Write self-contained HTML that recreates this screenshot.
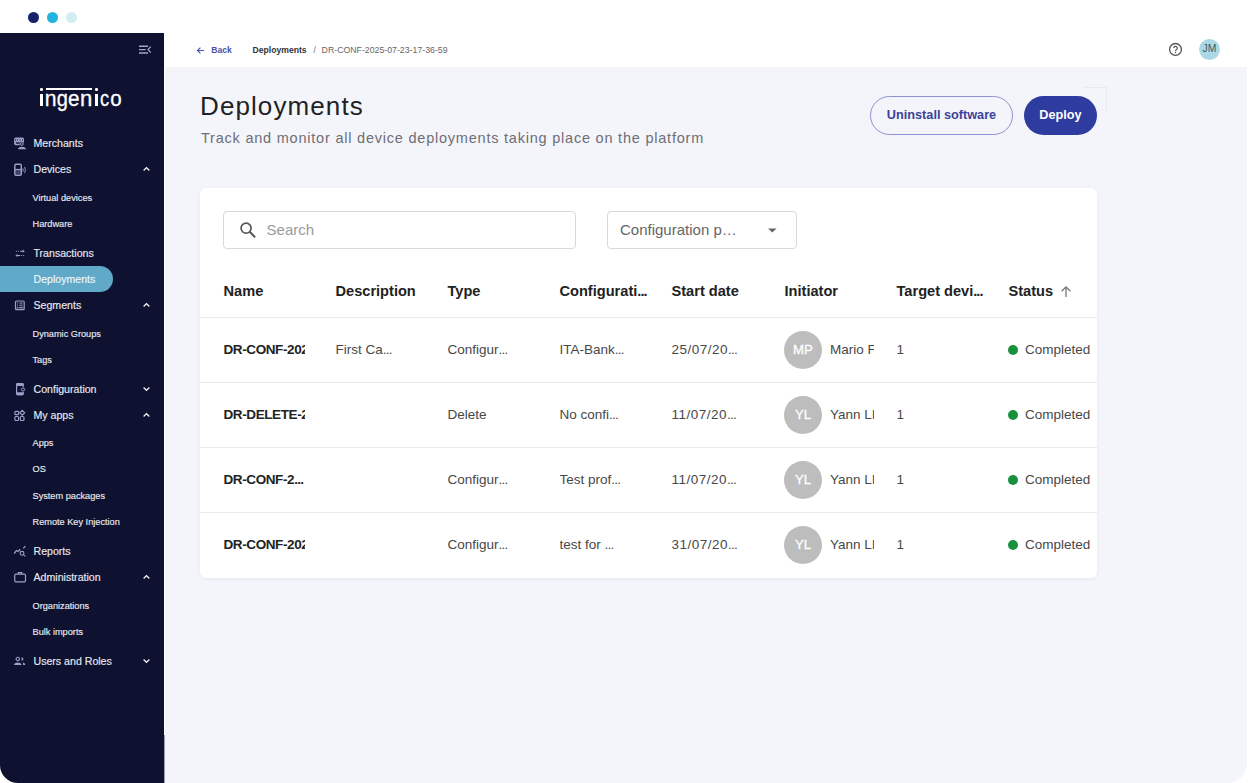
<!DOCTYPE html>
<html><head><meta charset="utf-8">
<style>
*{margin:0;padding:0;box-sizing:border-box}
html,body{width:1248px;height:783px;overflow:hidden;background:#fff;font-family:"Liberation Sans",sans-serif;position:relative}
.a{position:absolute;white-space:nowrap}
.dot{position:absolute;width:11px;height:11px;border-radius:50%;top:12px}
#side{position:absolute;left:0;top:33px;width:164px;height:750px;background:#0e1230;border-bottom-left-radius:18px}
#main{position:absolute;left:165px;top:66.6px;width:1081.6px;height:716.4px;background:#f4f5fa;border-bottom-right-radius:20px}
.mi{position:absolute;left:33.5px;height:16px;line-height:16px;font-size:10.6px;color:#e8e9f1;white-space:nowrap;-webkit-text-stroke:0.15px #e8e9f1}
.si{position:absolute;left:32.5px;height:14px;line-height:14px;font-size:9.2px;color:#e8e9f1;white-space:nowrap;-webkit-text-stroke:0.15px #e8e9f1}
.th{position:absolute;top:281px;height:20px;line-height:20px;font-size:14.6px;font-weight:bold;color:#222;white-space:nowrap}
.td{position:absolute;height:18px;line-height:18px;font-size:13.5px;color:#484848;white-space:nowrap;overflow:hidden}
.td.b{font-weight:bold;color:#222;letter-spacing:-0.4px}
.el{letter-spacing:-0.75px}
.th .el{letter-spacing:-1px}
.hl{position:absolute;left:200px;width:897px;height:1px;background:#ebebed}
.av{position:absolute;width:38px;height:38px;border-radius:50%;background:#bdbdbd;color:#fff;font-size:13.2px;-webkit-text-stroke:0.3px #fff;text-align:center;line-height:38px}
</style></head>
<body>
<div class="dot" style="left:27.5px;background:#13226a"></div>
<div class="dot" style="left:47px;background:#22b3de"></div>
<div class="dot" style="left:65.5px;background:#d2eef2"></div>

<div id="side"></div>
<div id="main"></div>
<div class="a" style="left:164px;top:735px;width:1px;height:48px;background:#9a9cab"></div>

<!-- sidebar -->
<svg class="a" style="left:136px;top:42px" width="18" height="14" viewBox="0 0 18 14"><path d="M3 4.2h9M3 7.6h6.6M3 11h9" stroke="#a3a6cc" stroke-width="1.4"/><path d="M14.8 4.6l-2.8 3 2.8 3" fill="none" stroke="#a3a6cc" stroke-width="1.3"/></svg>
<div class="a" style="left:40.3px;top:88.1px;width:2.6px;height:2.6px;border-radius:50%;background:#fff"></div>
<div class="a" style="left:40.3px;top:93.5px;width:2.6px;height:12.3px;background:#fff"></div>
<div class="a" style="left:46.1px;top:88.3px;width:45.8px;height:2.1px;background:#fff"></div>
<div class="a" style="left:95.2px;top:88.1px;width:2.7px;height:2.7px;border-radius:50%;background:#fff"></div>
<div class="a" style="left:95.2px;top:93.5px;width:2.7px;height:12.3px;background:#fff"></div>
<svg class="a" style="left:0;top:0" width="164" height="130"><g font-family="Liberation Sans" font-size="22.9" fill="#fff" stroke="#fff" stroke-width="0.3"><text transform="translate(44.69,105.8) scale(0.925,1)">n</text><text transform="translate(56.76,105.8) scale(0.874,1)">g</text><text transform="translate(67.92,105.8) scale(0.903,1)">e</text><text transform="translate(79.93,105.8) scale(0.966,1)">n</text><text transform="translate(100.12,105.8) scale(0.800,1)">c</text><text transform="translate(110.14,105.8) scale(0.897,1)">o</text></g></svg>
<div class="mi" style="top:135.0px">Merchants</div>
<svg class="a" style="left:12px;top:135.0px" width="16" height="16" viewBox="0 0 16 16"><rect x="2.1" y="2.6" width="9.9" height="7.6" rx="1.6" fill="#9c9fc8"/><circle cx="3.5" cy="4.9" r=".55" fill="#0e1230"/><circle cx="5.4" cy="4.9" r=".55" fill="#0e1230"/><circle cx="8.1" cy="4.9" r=".55" fill="#0e1230"/><circle cx="10.4" cy="4.9" r=".55" fill="#0e1230"/><rect x="3.9" y="7.3" width="3.8" height="1.4" fill="#0e1230"/><circle cx="9.8" cy="9" r="2.3" fill="#0e1230"/><circle cx="9.8" cy="9" r="1.4" fill="none" stroke="#9c9fc8" stroke-width="1"/><path d="M5.9 14.3C5.9 12.5 7.8 11.7 10 11.7S14.1 12.5 14.1 14.3z" fill="#9c9fc8"/></svg>
<div class="mi" style="top:161.0px">Devices</div>
<svg class="a" style="left:12px;top:161.0px" width="16" height="16" viewBox="0 0 16 16"><rect x="2.8" y="3.3" width="6.5" height="11.1" rx="1.3" fill="none" stroke="#9c9fc8" stroke-width="1.4"/><rect x="2.8" y="8.5" width="6.5" height="5.9" fill="#9c9fc8" opacity=".35"/><path d="M2.8 8.5h6.5" stroke="#9c9fc8" stroke-width="1.2"/><path d="M10.8 7.4q.9 1.6 0 3.2M12.6 5.9q1.6 3.1 0 6.2" fill="none" stroke="#9c9fc8" stroke-width=".9"/></svg>
<svg class="a" style="left:141px;top:164.8px" width="11" height="8" viewBox="0 0 11 8"><path d="M2.6 5.5L5.5 2.7l2.9 2.8" fill="none" stroke="#f0f0f6" stroke-width="1.25"/></svg>
<div class="si" style="top:191.0px">Virtual devices</div>
<div class="si" style="top:217.0px">Hardware</div>
<div class="mi" style="top:245.0px">Transactions</div>
<svg class="a" style="left:12px;top:245.0px" width="16" height="16" viewBox="0 0 16 16"><path d="M3.9 6.2h1M5.9 6.2h1M8 6.2h3" stroke="#9c9fc8" stroke-width="1.1"/><path d="M10.6 4.6l2.2 1.6-2.2 1.6z" fill="#9c9fc8"/><path d="M5.2 10.5h3M9.2 10.5h1M11.2 10.5h1" stroke="#9c9fc8" stroke-width="1.1"/><path d="M5.6 8.9L3.4 10.5l2.2 1.6z" fill="#9c9fc8"/></svg>
<div class="a" style="left:0;top:266px;width:112.5px;height:26px;background:#61a9c9;border-radius:0 13px 13px 0"></div>
<div class="mi" style="top:270.5px;color:#eef7fb;-webkit-text-stroke:0.15px #eef7fb">Deployments</div>
<div class="mi" style="top:297.0px">Segments</div>
<svg class="a" style="left:12px;top:297.0px" width="16" height="16" viewBox="0 0 16 16"><rect x="3.5" y="4" width="8.7" height="8.7" rx="1" fill="none" stroke="#9c9fc8" stroke-width="1.2"/><rect x="3.5" y="9.8" width="8.7" height="2.9" fill="#9c9fc8" opacity=".3"/><path d="M5.1 6h1M5.1 8.2h1M5.1 10.4h1M7.3 6h3.4M7.3 8.2h3.4M7.3 10.4h3.4" stroke="#9c9fc8" stroke-width="1"/></svg>
<svg class="a" style="left:141px;top:300.8px" width="11" height="8" viewBox="0 0 11 8"><path d="M2.6 5.5L5.5 2.7l2.9 2.8" fill="none" stroke="#f0f0f6" stroke-width="1.25"/></svg>
<div class="si" style="top:327.0px">Dynamic Groups</div>
<div class="si" style="top:353.0px">Tags</div>
<div class="mi" style="top:381.0px">Configuration</div>
<svg class="a" style="left:12px;top:381.0px" width="16" height="16" viewBox="0 0 16 16"><rect x="4.6" y="2.7" width="6.6" height="11" rx="1.4" fill="none" stroke="#9c9fc8" stroke-width="1.2"/><rect x="4" y="2.1" width="7.8" height="2.9" rx="1.6" fill="#9c9fc8"/><rect x="4" y="11.2" width="7.8" height="3.1" rx="1.6" fill="#9c9fc8"/><circle cx="11" cy="8.5" r="2.6" fill="#0e1230"/><ellipse cx="11" cy="8.5" rx="1.7" ry="1.5" fill="none" stroke="#9c9fc8" stroke-width="1"/></svg>
<svg class="a" style="left:141px;top:384.8px" width="11" height="8" viewBox="0 0 11 8"><path d="M2.6 2.5L5.5 5.3l2.9-2.8" fill="none" stroke="#f0f0f6" stroke-width="1.25"/></svg>
<div class="mi" style="top:407.0px">My apps</div>
<svg class="a" style="left:12px;top:407.0px" width="16" height="16" viewBox="0 0 16 16"><rect x="2.9" y="4.3" width="3.7" height="3.4" rx="1" fill="none" stroke="#9c9fc8" stroke-width="1.2"/><path d="M10.2 3.4l2.5 2.4-2.5 2.4-2.3-2.4z" fill="none" stroke="#9c9fc8" stroke-width="1.2"/><rect x="2.9" y="9.5" width="3.7" height="4" rx="1" fill="none" stroke="#9c9fc8" stroke-width="1.2"/><rect x="8.3" y="9.5" width="3.7" height="4" rx="1" fill="none" stroke="#9c9fc8" stroke-width="1.2"/></svg>
<svg class="a" style="left:141px;top:410.8px" width="11" height="8" viewBox="0 0 11 8"><path d="M2.6 5.5L5.5 2.7l2.9 2.8" fill="none" stroke="#f0f0f6" stroke-width="1.25"/></svg>
<div class="si" style="top:436.0px">Apps</div>
<div class="si" style="top:462.0px">OS</div>
<div class="si" style="top:489.0px">System packages</div>
<div class="si" style="top:515.0px">Remote Key Injection</div>
<div class="mi" style="top:543.0px">Reports</div>
<svg class="a" style="left:12px;top:543.0px" width="16" height="16" viewBox="0 0 16 16"><path d="M2.2 10.5L4.4 7.5l1.8 1 2-2.3M11.3 5.4l2-2.3" fill="none" stroke="#9c9fc8" stroke-width="1.3"/><circle cx="10" cy="10.3" r="1.9" fill="none" stroke="#9c9fc8" stroke-width="1.1"/><path d="M11.4 11.7l1.9 1.6" stroke="#9c9fc8" stroke-width="1.1"/></svg>
<div class="mi" style="top:569.0px">Administration</div>
<svg class="a" style="left:12px;top:569.0px" width="16" height="16" viewBox="0 0 16 16"><rect x="2.7" y="5.1" width="10.8" height="7.8" rx="1.4" fill="none" stroke="#9c9fc8" stroke-width="1.2"/><path d="M6.4 5.1V3.6h3.4v1.5" fill="none" stroke="#9c9fc8" stroke-width="1.1"/></svg>
<svg class="a" style="left:141px;top:572.8px" width="11" height="8" viewBox="0 0 11 8"><path d="M2.6 5.5L5.5 2.7l2.9 2.8" fill="none" stroke="#f0f0f6" stroke-width="1.25"/></svg>
<div class="si" style="top:599.0px">Organizations</div>
<div class="si" style="top:625.0px">Bulk imports</div>
<div class="mi" style="top:653.0px">Users and Roles</div>
<svg class="a" style="left:12px;top:653.0px" width="16" height="16" viewBox="0 0 16 16"><circle cx="5.8" cy="6" r="1.7" fill="none" stroke="#9c9fc8" stroke-width="1.1"/><path d="M9.6 4.2a1.8 1.8 0 0 1 0 3.6z" fill="#9c9fc8"/><path d="M2 12c0-1.6 1.6-2.5 3.8-2.5s3.8.9 3.8 2.5z" fill="#9c9fc8"/><path d="M10.9 9.5c1.4.2 2.3.9 2.3 2.5h-2.1c0-1-.1-1.8-.2-2.5z" fill="#9c9fc8"/></svg>
<svg class="a" style="left:141px;top:656.8px" width="11" height="8" viewBox="0 0 11 8"><path d="M2.6 2.5L5.5 5.3l2.9-2.8" fill="none" stroke="#f0f0f6" stroke-width="1.25"/></svg>

<!-- header -->
<svg class="a" style="left:195px;top:44.6px" width="11" height="11" viewBox="0 0 11 11"><path d="M9 5.5H2.6M5.4 2.6L2.5 5.5l2.9 2.9" fill="none" stroke="#4d53ad" stroke-width="1.2"/></svg>
<div class="a" style="left:211.3px;top:43.8px;font-size:8.6px;line-height:13px;font-weight:bold;color:#4a4fa6">Back</div>
<div class="a" style="left:252.6px;top:43.8px;font-size:8.6px;line-height:13px;font-weight:bold;color:#333">Deployments</div>
<div class="a" style="left:313.5px;top:43.8px;font-size:8.6px;line-height:13px;color:#777">/</div>
<div class="a" style="left:321.6px;top:43.8px;font-size:8.75px;line-height:13px;color:#666">DR-CONF-2025-07-23-17-36-59</div>
<svg class="a" style="left:1167px;top:41px" width="17" height="17" viewBox="0 0 17 17"><circle cx="8.5" cy="8.4" r="5.9" fill="none" stroke="#555" stroke-width="1.3"/><path d="M6.7 7.1a1.8 1.8 0 1 1 2.6 1.6c-.6.3-.8.6-.8 1.3" fill="none" stroke="#555" stroke-width="1.2"/><circle cx="8.5" cy="11.6" r=".75" fill="#555"/></svg>
<div class="a" style="left:1199px;top:39.1px;width:20.8px;height:20.8px;border-radius:50%;background:#acd7e5;color:#3d5b69;font-size:10.4px;line-height:20.8px;text-align:center">JM</div>

<!-- page title -->
<div class="a" style="left:200px;top:90px;font-size:26px;line-height:32px;color:#1f1f25;letter-spacing:1.1px">Deployments</div>
<div class="a" style="left:201px;top:128.2px;font-size:14.5px;line-height:20px;color:#6e6e76;letter-spacing:0.78px">Track and monitor all device deployments taking place on the platform</div>
<div class="a" style="left:870px;top:96px;width:143px;height:39px;border:1px solid #8f92d2;border-radius:20px;color:#3b4299;font-weight:bold;font-size:12.7px;line-height:37px;text-align:center">Uninstall software</div>
<div class="a" style="left:1024px;top:96px;width:73px;height:39px;background:#2e3c9f;border-radius:20px;color:#fff;font-weight:bold;font-size:12.7px;line-height:39px;text-align:center">Deploy</div>

<div class="a" style="left:1084px;top:86.5px;width:23px;height:24px;border-top:1px solid #e9eaf0;border-right:1px solid #e9eaf0"></div>
<!-- card -->
<div class="a" style="left:200px;top:188px;width:897px;height:390px;background:#fff;border-radius:6px;box-shadow:0 1px 4px rgba(0,0,0,0.06)"></div>
<div class="a" style="left:223px;top:211px;width:353px;height:38px;border:1px solid #d9d9d9;border-radius:4px"></div>
<svg class="a" style="left:237px;top:220px" width="20" height="20" viewBox="0 0 20 20"><circle cx="9.1" cy="8.2" r="5" fill="none" stroke="#555" stroke-width="1.7"/><path d="M12.7 11.8l5.4 5.4" stroke="#555" stroke-width="2"/></svg>
<div class="a" style="left:266.6px;top:220px;font-size:15px;line-height:20px;color:#9a9a9a">Search</div>
<div class="a" style="left:607px;top:211px;width:190px;height:38px;border:1px solid #d9d9d9;border-radius:4px"></div>
<div class="a" style="left:620px;top:220px;font-size:15px;line-height:20px;color:#666">Configuration p…</div>
<svg class="a" style="left:766px;top:226px" width="13" height="9" viewBox="0 0 13 9"><path d="M2 2.4h8.6L6.3 6.6z" fill="#666"/></svg>
<div class="th" style="left:223.5px">Name</div>
<div class="th" style="left:335.5px">Description</div>
<div class="th" style="left:447.5px">Type</div>
<div class="th" style="left:559.5px">Configurati<span class="el">...</span></div>
<div class="th" style="left:671.5px">Start date</div>
<div class="th" style="left:784.5px">Initiator</div>
<div class="th" style="left:896.5px">Target devi<span class="el">...</span></div>
<div class="th" style="left:1008.5px">Status</div>
<svg class="a" style="left:1059px;top:285px" width="14" height="13" viewBox="0 0 14 13"><path d="M7 12V2M2.6 6.2L7 1.8l4.4 4.4" fill="none" stroke="#777" stroke-width="1.3"/></svg>
<div class="hl" style="top:317px"></div>
<div class="td b" style="left:223.5px;top:340.5px;width:81.5px">DR-CONF-202</div>
<div class="td" style="left:335.5px;top:340.5px">First Ca<span class="el">...</span></div>
<div class="td" style="left:447.5px;top:340.5px">Configur<span class="el">...</span></div>
<div class="td" style="left:559.5px;top:340.5px">ITA-Bank<span class="el">...</span></div>
<div class="td" style="left:671.5px;top:340.5px;letter-spacing:0.5px">25/07/20<span class="el">...</span></div>
<div class="av" style="left:784px;top:330.5px">MP</div>
<div class="td" style="left:830px;top:340.5px;width:44px">Mario Fe</div>
<div class="td" style="left:896.5px;top:340.5px">1</div>
<div class="a" style="left:1008px;top:344.5px;width:10px;height:10px;border-radius:50%;background:#18913d"></div>
<div class="td" style="left:1025px;top:340.5px">Completed</div>
<div class="hl" style="top:382px"></div>
<div class="td b" style="left:223.5px;top:405.5px;width:81.5px">DR-DELETE-2</div>
<div class="td" style="left:447.5px;top:405.5px">Delete</div>
<div class="td" style="left:559.5px;top:405.5px">No confi<span class="el">...</span></div>
<div class="td" style="left:671.5px;top:405.5px;letter-spacing:0.5px">11/07/20<span class="el">...</span></div>
<div class="av" style="left:784px;top:395.5px">YL</div>
<div class="td" style="left:830px;top:405.5px;width:44px">Yann LI</div>
<div class="td" style="left:896.5px;top:405.5px">1</div>
<div class="a" style="left:1008px;top:409.5px;width:10px;height:10px;border-radius:50%;background:#18913d"></div>
<div class="td" style="left:1025px;top:405.5px">Completed</div>
<div class="hl" style="top:447px"></div>
<div class="td b" style="left:223.5px;top:470.5px;width:81.5px">DR-CONF-2<span class="el">...</span></div>
<div class="td" style="left:447.5px;top:470.5px">Configur<span class="el">...</span></div>
<div class="td" style="left:559.5px;top:470.5px">Test prof<span class="el">...</span></div>
<div class="td" style="left:671.5px;top:470.5px;letter-spacing:0.5px">11/07/20<span class="el">...</span></div>
<div class="av" style="left:784px;top:460.5px">YL</div>
<div class="td" style="left:830px;top:470.5px;width:44px">Yann LI</div>
<div class="td" style="left:896.5px;top:470.5px">1</div>
<div class="a" style="left:1008px;top:474.5px;width:10px;height:10px;border-radius:50%;background:#18913d"></div>
<div class="td" style="left:1025px;top:470.5px">Completed</div>
<div class="hl" style="top:512px"></div>
<div class="td b" style="left:223.5px;top:535.5px;width:81.5px">DR-CONF-202</div>
<div class="td" style="left:447.5px;top:535.5px">Configur<span class="el">...</span></div>
<div class="td" style="left:559.5px;top:535.5px">test for <span class="el">...</span></div>
<div class="td" style="left:671.5px;top:535.5px;letter-spacing:0.5px">31/07/20<span class="el">...</span></div>
<div class="av" style="left:784px;top:525.5px">YL</div>
<div class="td" style="left:830px;top:535.5px;width:44px">Yann LI</div>
<div class="td" style="left:896.5px;top:535.5px">1</div>
<div class="a" style="left:1008px;top:539.5px;width:10px;height:10px;border-radius:50%;background:#18913d"></div>
<div class="td" style="left:1025px;top:535.5px">Completed</div>
</body></html>
